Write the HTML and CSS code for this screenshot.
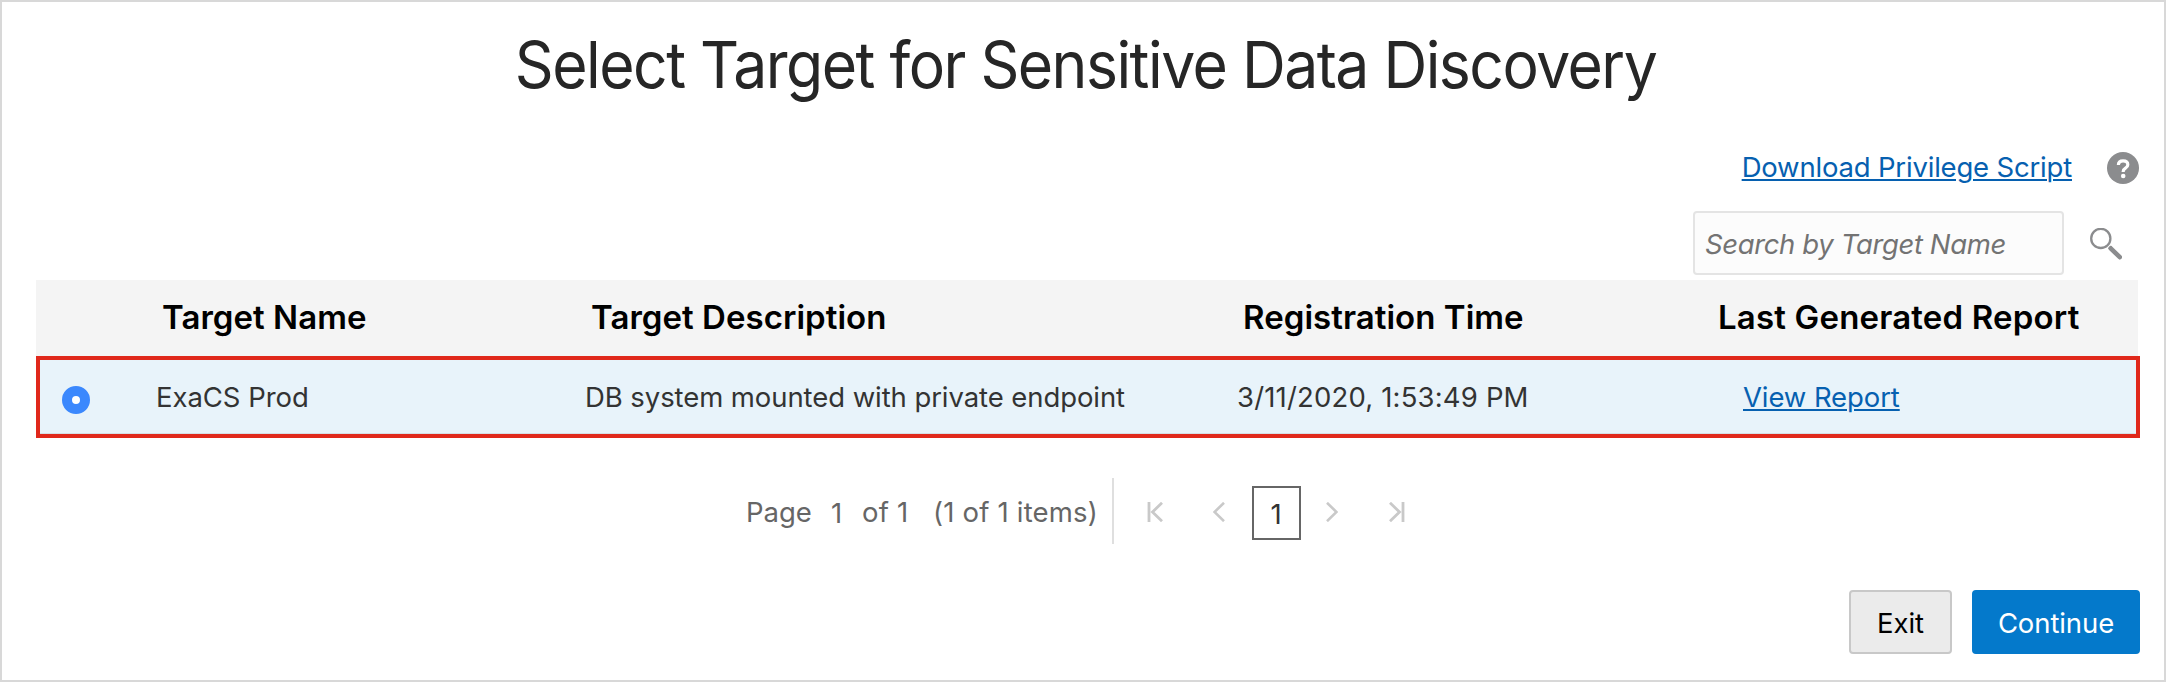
FILE: index.html
```
<!DOCTYPE html>
<html lang="en">
<head>
<meta charset="utf-8">
<title>Select Target for Sensitive Data Discovery</title>
<link rel="stylesheet" href="styles.css">
</head>
<body>
<main class="page">
  <h1 class="title">Select Target for Sensitive Data Discovery</h1>
  <div class="help-row">
    <a class="link download" href="#">Download Privilege Script</a>
    <svg class="help" viewBox="0 0 32 32" aria-label="Help"><circle cx="16" cy="16" r="16" fill="#8b8c8e"/><path d="M11.400 13c0-2.700 1.900-4.200 4.700-4.200s4.700 1.500 4.700 3.900c0 1.700-.9 2.600-2.300 3.400-1.600 1-2.300 1.700-2.300 3.300v.6" fill="none" stroke="#fff" stroke-width="3.200"/><circle cx="16.200" cy="24" r="2.300" fill="#fff"/></svg>
  </div>
  <div class="search-row">
    <input class="search" type="text" placeholder="Search by Target Name">
    <svg class="magnifier" viewBox="0 0 32 32" fill="none" stroke="#8b8c8e"><circle cx="10.800" cy="10.400" r="9.600" stroke-width="2.300"/><path d="M19.600 19.200L20.800 20.400" stroke-width="4"/><path d="M20.700 20.300L29.800 29.200" stroke-width="4.600" stroke-linecap="round"/></svg>
  </div>
  <section class="table">
    <div class="head">
      <span></span>
      <span>Target Name</span>
      <span>Target Description</span>
      <span class="registered">Registration Time</span>
      <span class="last">Last Generated Report</span>
    </div>
    <div class="row">
      <span class="radio"></span>
      <span class="name">ExaCS Prod</span>
      <span class="desc">DB system mounted with private endpoint</span>
      <span class="time">3/11/2020, 1:53:49 PM</span>
      <span class="report"><a class="link" href="#">View Report</a></span>
    </div>
  </section>
  <nav class="pager">
    <span class="label">Page</span>
    <span class="number">1</span>
    <span class="of">of 1</span>
    <span class="items">(1 of 1 items)</span>
    <span class="divider"></span>
    <svg class="icon first" viewBox="0 0 16 20"><path d="M2 0V20M15 .8L5.500 10L15 19.200"/></svg>
    <svg class="icon prev" viewBox="0 0 12 20"><path d="M11 .8L1.500 10L11 19.200"/></svg>
    <span class="current">1</span>
    <svg class="icon next" viewBox="0 0 12 20"><path d="M1 .8L10.500 10L1 19.200"/></svg>
    <svg class="icon end" viewBox="0 0 16 20"><path d="M14 0V20M1 .8L10.500 10L1 19.200"/></svg>
  </nav>
  <footer class="actions">
    <button class="button exit">Exit</button>
    <button class="button continue">Continue</button>
  </footer>
</main>
</body>
</html>
```
FILE: styles.css
```
* { box-sizing: border-box; }
body { margin: 0; background: #fff; }
.page {
  width: 2166px;
  height: 682px;
  padding: 22px 24px 0 34px;
  border: 2px solid #d8d8d8;
  background: #fff;
  font-family: Inter, "Liberation Sans", sans-serif;
  font-size: 27.5px;
  color: #333;
}
.title {
  height: 82px;
  margin: 0 5px 46px 0;
  font-size: 64.5px;
  line-height: 83px;
  font-weight: 400;
  letter-spacing: -1.6px;
  text-align: center;
  white-space: nowrap;
  color: #262626;
  transform: scaleX(.94);
}
.link {
  color: #0660b0;
  text-decoration: underline;
  text-decoration-thickness: 2px;
  text-underline-offset: 2px;
}
.help-row {
  display: flex;
  justify-content: flex-end;
  gap: 35px;
  height: 32px;
  padding-right: 1px;
}
.download { line-height: 30px; letter-spacing: -.19px; }
.help { width: 32px; height: 32px; }
.search-row {
  display: flex;
  justify-content: flex-end;
  gap: 26px;
  height: 64px;
  margin: 27px 0 5px;
  padding-right: 18px;
}
.search {
  width: 371px;
  height: 64px;
  padding: 2px 10px 0;
  border: 2px solid #e4e4e4;
  border-radius: 4px;
  background: #fcfcfc;
  font: italic 27.5px Inter, "Liberation Sans", sans-serif;
  letter-spacing: -.38px;
}
.search::placeholder { color: #737373; opacity: 1; }
.magnifier { width: 32px; height: 32px; margin-top: 17px; }
.head {
  display: grid;
  grid-template-columns: 112px 429px 653px 481px 1fr;
  width: 2102px;
  height: 76px;
  background: #f4f4f4;
  color: #000;
  font-size: 33px;
  font-weight: 600;
  line-height: 74px;
  letter-spacing: .04px;
  white-space: nowrap;
}
.head span { padding-left: 14px; }
.head .registered { padding-left: 13px; }
.head .last { padding-left: 7px; letter-spacing: .18px; }
.row {
  display: grid;
  grid-template-columns: 108px 429px 653px 481px 1fr;
  height: 82px;
  border: 4px solid #e0281b;
  background: #e8f3fa;
  box-shadow: inset 0 -1px #d5dee4;
  line-height: 74px;
  white-space: nowrap;
}
.row span { padding-left: 7px; }
.row .name { padding-left: 8px; letter-spacing: -.05px; }
.row .desc { padding-left: 8px; letter-spacing: -.08px; }
.row .time { letter-spacing: .17px; }
.row .report { padding-left: 32px; letter-spacing: -.1px; }
.row .radio {
  width: 28px;
  height: 28px;
  margin: 26px 0 0 22px;
  padding: 0;
  border: 10px solid #3b88fd;
  border-radius: 50%;
  background: #fff;
}
.pager {
  display: flex;
  align-items: center;
  height: 66px;
  margin-top: 40px;
  padding-left: 710px;
  line-height: 66px;
  color: #666;
  white-space: nowrap;
}
.label { width: 85px; padding-top: 2px; }
.number { width: 31px; padding-top: 4px; }
.of { width: 71px; padding-top: 2px; letter-spacing: .2px; }
.items { width: 179px; padding-top: 2px; letter-spacing: .19px; }
.divider { width: 2px; height: 66px; background: #dfdfdf; }
.icon { height: 20px; margin-top: 2px; fill: none; stroke: #c9c9c9; stroke-width: 2.600; }
.first { width: 16px; margin-left: 33px; }
.first path, .end path { stroke-width: 2.800; }
.prev { width: 12px; margin-left: 50px; }
.current {
  width: 49px;
  height: 54px;
  margin: 4px 0 0 27px;
  padding-right: 1px;
  border: 2px solid #666;
  line-height: 52px;
  text-align: center;
  color: #333;
}
.next { width: 12px; margin-left: 25px; }
.end { width: 16px; margin-left: 51px; }
.actions {
  display: flex;
  justify-content: flex-end;
  gap: 20px;
  margin-top: 46px;
}
.button {
  height: 64px;
  padding: 2px 0 0;
  border: 2px solid #c8c8c8;
  border-radius: 4px;
  background: #ebebeb;
  color: #000;
  font: 27.5px Inter, "Liberation Sans", sans-serif;
  letter-spacing: -.1px;
}
.exit { width: 103px; }
.continue { width: 168px; border-color: #0479cb; background: #0479cb; color: #fff; }
```
